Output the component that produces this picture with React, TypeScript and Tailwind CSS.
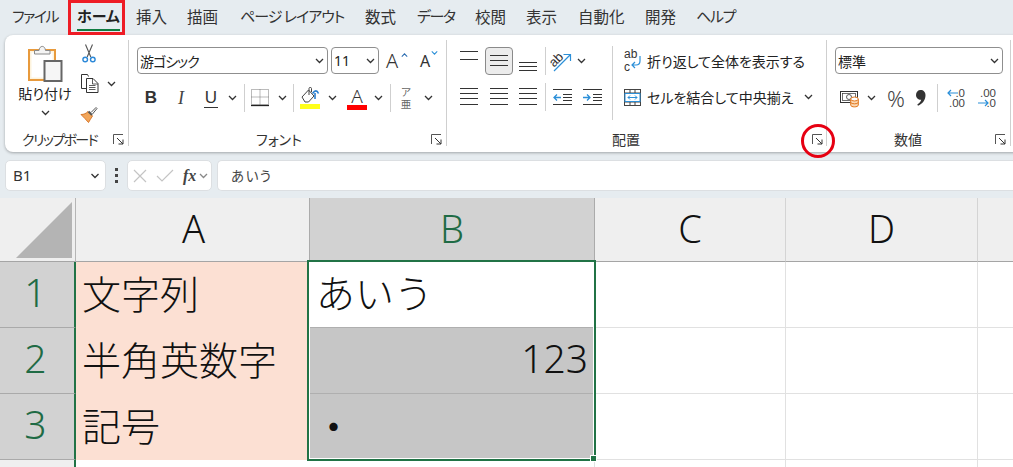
import React from "react";

const Chev = ({ w = 9, c = "#333" }: { w?: number; c?: string }) => (
  <svg width={w} height="6" viewBox="0 0 9 6" fill="none" className="block"><path d="M1 1l3.5 3.5L8 1" stroke={c} strokeWidth="1.3" /></svg>
);
const ChevBox = ({ cls = "w-[12px]" }: { cls?: string }) => (
  <div className={`${cls} h-[24px] flex items-center justify-center shrink-0`}><Chev /></div>
);
const Launcher = () => (
  <svg width="11" height="11" viewBox="0 0 11 11" fill="none" className="block"><path d="M.5 10V.5H10" stroke="#555" /><path d="M4 4l6 6M10 5.5V10H5.5" stroke="#333" /></svg>
);
const VSep = ({ h = "h-[28px]", ml = "ml-0" }: { h?: string; ml?: string }) => <div className={`w-px ${h} ${ml} bg-[#cfcfcf] shrink-0`} />;
const Btn = ({ w = "w-[30px]", children }: { w?: string; children?: React.ReactNode }) => (
  <div className={`${w} h-[24px] flex items-center justify-center shrink-0`}>{children}</div>
);
const Combo = ({ cls, text, tcls = "" }: { cls: string; text: string; tcls?: string }) => (
  <div className={`${cls} h-[27px] border border-[#8f8f8f] rounded-[4px] flex items-center justify-between pl-[2px] pr-[3px] bg-white shrink-0`}>
    <span className={`text-[14px] leading-none text-[#222] ${tcls}`}>{text}</span><Chev />
  </div>
);
const Lines = ({ ys }: { ys: number[] }) => (
  <svg width="18" height="18" viewBox="0 0 18 18" fill="none" className="block overflow-visible">
    {ys.map((y, i) => <path key={i} d={`M0 ${y + 0.5}H18`} stroke="#333" />)}
  </svg>
);
const GroupLabel = ({ text, pl, launcher, lpos, tcls = "" }: { text: string; pl: string; launcher?: boolean; lpos: string; tcls?: string }) => (
  <div className="mt-auto h-[18px] flex items-center relative">
    <span className={`text-[14px] leading-none text-[#333] whitespace-nowrap ${pl} ${tcls}`}>{text}</span>
    {launcher && <span className={`absolute top-[4px] ${lpos}`}><Launcher /></span>}
  </div>
);

const Paste = () => (
  <svg width="36" height="40" viewBox="0 0 36 40" fill="none" className="block">
    <rect x="2" y="7" width="26" height="30" fill="#fdf3dd" stroke="#e89a3c" strokeWidth="2" />
    <rect x="4.5" y="9.5" width="21" height="25" fill="#fff" />
    <path d="M7.5 11V7.5H12C12.5 2 18 2 18.5 7.5H23V11Z" fill="#f4f4f4" stroke="#8a8a8a" />
    <rect x="17.5" y="18" width="17" height="20" fill="#f6f6f6" stroke="#666" strokeWidth="2" />
  </svg>
);
const Scissors = () => (
  <svg width="14" height="19" viewBox="0 0 14 19" fill="none" className="block">
    <path d="M3.5 0.5L8.8 13M10.5 .5L5.2 13" stroke="#555" strokeWidth="1.1" />
    <circle cx="3.2" cy="15.5" r="2.3" stroke="#2b88d8" strokeWidth="1.4" /><circle cx="10.8" cy="15.5" r="2.3" stroke="#2b88d8" strokeWidth="1.4" />
  </svg>
);
const Copy = () => (
  <svg width="19" height="19" viewBox="0 0 19 19" fill="none" className="block">
    <path d="M6 14.5H1.5V.5H7.5L8.5 2.5" stroke="#333" />
    <path d="M6.5 4.5H13L18 9.5V18.5H6.5Z" fill="#fff" stroke="#333" /><path d="M12.5 4.5V10H18M9 11.5H15.5M9 13.5H15.5M9 15.5H15.5" stroke="#333" strokeWidth=".8" />
  </svg>
);
const Painter = () => (
  <svg width="18" height="17" viewBox="0 0 18 17" fill="none" className="block">
    <path d="M1 8.5C4 8.5 6 7.5 8 5.5L12.5 10C11 12.5 9.5 14.5 8.5 16.5C6 13.5 3.5 11 1 8.5Z" fill="#f2a65a" stroke="#d9782c" />
    <path d="M8.5 5.5L12 9" stroke="#555" strokeWidth="2" /><path d="M11 6.5L16 1.5L17 2.5L12.5 8" fill="#fff" stroke="#555" />
  </svg>
);
const Borders = () => (
  <svg width="18" height="18" viewBox="0 0 18 18" fill="none" className="block">
    <path d="M.5 .5H17.5V15.5H.5Z M.5 8H17.5M9 .5V15.5" stroke="#777" strokeDasharray="1 1" /><path d="M0 16.5H18" stroke="#222" strokeWidth="1.3" />
  </svg>
);
const Fill = () => (
  <div className="flex flex-col items-center">
    <svg width="20" height="17" viewBox="0 0 20 17" fill="none" className="block">
      <path d="M2 10L8.5 3L14 9L8.5 15H5Z" fill="#fff" stroke="#444" /><path d="M9 8V1.5C9 0 11.5 0 11.5 1.5V5" stroke="#444" />
      <path d="M15 12V6M12.5 6.5C15 3 17 3 18.5 6.5" stroke="#2b7fd0" strokeWidth="1.6" />
    </svg>
    <div className="w-[20px] h-[5px] bg-[#ffff1a]" />
  </div>
);
const Orient = () => (
  <svg width="24" height="24" viewBox="0 0 24 24" fill="none" className="block overflow-visible">
    <text x="0" y="15" fontSize="13" fill="#333" transform="rotate(-45 7 11)" fontFamily="'Liberation Sans',sans-serif">ab</text>
    <path d="M5 22L21 6M14.5 5.5H21.5V12" stroke="#2b8fd8" strokeWidth="1.2" />
  </svg>
);
const IndentL = () => (
  <svg width="19" height="16" viewBox="0 0 19 16" fill="none" className="block">
    <path d="M0 .5H19M10 5.5H19M10 8.5H19M10 11.5H19M0 15.5H19" stroke="#333" /><path d="M8 8.5H1M4 5.5L1 8.5L4 11.5" stroke="#2b8fd8" strokeWidth="1.3" />
  </svg>
);
const IndentR = () => (
  <svg width="19" height="16" viewBox="0 0 19 16" fill="none" className="block">
    <path d="M0 .5H19M10 5.5H19M10 8.5H19M10 11.5H19M0 15.5H19" stroke="#333" /><path d="M0 8.5H7M4 5.5L7 8.5L4 11.5" stroke="#2b8fd8" strokeWidth="1.3" />
  </svg>
);
const Wrap = () => (
  <div className="relative w-[18px] h-[20px] shrink-0">
    <span className="absolute left-0 top-[-3px] text-[12px] leading-[12px] text-[#333] font-['Liberation_Sans']">ab</span>
    <span className="absolute left-0 top-[10px] text-[12px] leading-[12px] text-[#333] font-['Liberation_Sans']">c</span>
    <svg width="18" height="20" viewBox="0 0 18 20" fill="none" className="absolute left-0 top-0"><path d="M16 5V10C16 13 14 14 12 14H8M11 11L8 14L11 17" stroke="#2b8fd8" strokeWidth="1.2" /></svg>
  </div>
);
const Merge = () => (
  <svg width="17" height="17" viewBox="0 0 17 17" fill="none" className="block shrink-0">
    <rect x=".5" y=".5" width="16" height="16" stroke="#444" /><path d="M.5 4H16.5M.5 13H16.5M6 .5V4M11 .5V4M6 13V16.5M11 13V16.5" stroke="#444" /><rect x="1" y="4.5" width="15" height="8" stroke="#2b8fd8" /><path d="M4 8.5H13M6 6.5L4 8.5L6 10.5M11 6.5L13 8.5L11 10.5" stroke="#2b8fd8" />
  </svg>
);
const Currency = () => (
  <svg width="20" height="20" viewBox="0 0 20 20" fill="none" className="block">
    <rect x=".5" y="3.5" width="17" height="11" fill="#fff" stroke="#333" /><rect x="2.5" y="5.5" width="13" height="7" stroke="#333" strokeWidth=".7" /><circle cx="9" cy="9" r="2.5" stroke="#333" strokeWidth=".8" />
    <path d="M10.7 11V17C10.7 19.5 18.3 19.5 18.3 17V11" fill="#fbd9b5" stroke="#e2761b" /><ellipse cx="14.5" cy="11" rx="3.8" ry="2" fill="#fff" stroke="#e2761b" /><path d="M10.7 14.5C11.5 16.3 17.5 16.3 18.3 14.5" stroke="#e2761b" />
  </svg>
);
const CommaIcon = () => (
  <svg width="10" height="16" viewBox="0 0 10 16" className="block"><path fill="#333" d="M4.5 0C7.5 0 9.5 2 9.5 5.2C9.5 10 6.3 14 2 15.8L1.3 14.6C3.8 13 5 11.2 5.2 9.8C2.5 10 0 8 0 5C0 2 2 0 4.5 0Z" /></svg>
);
const Dec = ({ dir }: { dir: "l" | "r" }) => (
  <div className="w-[18px] h-[20px] relative font-['Liberation_Sans'] text-[11.5px] leading-[10px] text-[#444]">
    <span className="absolute right-0 top-0">{dir === "l" ? ".0" : ".00"}</span>
    <span className="absolute right-0 top-[10px]">{dir === "l" ? ".00" : ".0"}</span>
    <svg width="11" height="8" viewBox="0 0 11 8" fill="none" className={`absolute ${dir === "l" ? "left-0 top-[1px]" : "left-0 top-[11px]"}`}>
      {dir === "l" ? <path d="M11 4H1M4 1L1 4L4 7" stroke="#2b8fd8" strokeWidth="1.2" /> : <path d="M0 4H10M7 1L10 4L7 7" stroke="#2b8fd8" strokeWidth="1.2" />}
    </svg>
  </div>
);

const tabs: { t: string; w: string; c: string }[] = [
  { t: "ファイル", w: "w-[65px]", c: "tracking-[-1.5px]" },
  { t: "ホーム", w: "w-[59px]", c: "font-bold text-[#222]" },
  { t: "挿入", w: "w-[51px]", c: "text-[15.5px]" },
  { t: "描画", w: "w-[53px]", c: "text-[15.5px]" },
  { t: "ページ レイアウト", w: "w-[125px]", c: "tracking-[-1px]" },
  { t: "数式", w: "w-[52px]", c: "text-[15.5px]" },
  { t: "データ", w: "w-[58px]", c: "tracking-[-1.5px]" },
  { t: "校閲", w: "w-[51px]", c: "text-[15.5px]" },
  { t: "表示", w: "w-[52px]", c: "text-[15.5px]" },
  { t: "自動化", w: "w-[67px]", c: "text-[15.5px]" },
  { t: "開発", w: "w-[51px]", c: "text-[15.5px]" },
  { t: "ヘルプ", w: "w-[50px]", c: "tracking-[-1.3px]" },
];

const latin = "font-['Noto_Sans'] font-light";
const hCell = `flex items-center justify-center text-[38px] leading-none pb-[4px] ${latin}`;
const rowHead = `bg-[#d2d2d2] border-b border-[#aaaaaa] flex items-center justify-center text-[39px] leading-none text-[#1f6b45] pr-[3px] pb-[6px] ${latin}`;
const pink = "bg-[#fce0d3] flex items-center pl-[6px] pb-[6px] text-[39px] leading-none text-[#111] whitespace-nowrap font-light";
const blank = "border-r border-b border-[#e1e1e1] bg-white";

export default function App() {
  return (
    <div className="relative w-[1013px] h-[467px] overflow-hidden bg-[#e6ecf0] font-['Noto_Sans_CJK_JP','Noto_Sans',sans-serif] [font-feature-settings:'palt']">
      {/* tab strip */}
      <div className="h-[35px] flex items-center pl-[12px] pb-[3px] text-[15px] text-[#333]">
        {tabs.map(({ t, w, c }) => (
          <div key={t} className={`${w} shrink-0 whitespace-nowrap leading-[20px]`}>
            <span className={`relative inline-block ${c}`}>
              {t}
              {t === "ホーム" && <span className="absolute left-0 right-0 top-[23px] h-[2px] bg-[#107c41]" />}
            </span>
          </div>
        ))}
      </div>

      {/* ribbon */}
      <div className="ml-[5px] w-[1030px] h-[117px] bg-white rounded-l-[8px] shadow-[0_1px_3px_rgba(0,0,0,0.3)] flex pt-[5px] pb-[4px]">
        {/* clipboard */}
        <div className="w-[123px] flex flex-col shrink-0">
          <div className="flex">
            <div className="ml-[12px] w-[56px] flex flex-col items-center pt-[3px]">
              <Paste />
              <span className="text-[14px] leading-[20px] whitespace-nowrap text-[#222]">貼り付け</span>
              <div className="mt-[7px]"><Chev /></div>
            </div>
            <div className="ml-[7px] pt-[4px] flex flex-col items-start">
              <div className="ml-[2px]"><Scissors /></div>
              <div className="mt-[11px] flex items-center"><Copy /><div className="ml-[8px]"><Chev /></div></div>
              <div className="mt-[13px]"><Painter /></div>
            </div>
          </div>
          <GroupLabel text="クリップボード" pl="pl-[17px]" tcls="tracking-[-1.6px]" launcher lpos="left-[108px]" />
        </div>
        <VSep h="h-[106px]" />
        {/* font */}
        <div className="w-[317px] flex flex-col shrink-0">
          <div className="flex items-center pt-[7px] pl-[8px]">
            <Combo cls="w-[191px]" text="游ゴシック" tcls="tracking-[-1px]" />
            <Combo cls="w-[48px] ml-[3px]" text="11" tcls="font-['Noto_Sans']" />
            <div className="ml-[6px] w-[30px] text-[20px] leading-none text-[#333] relative font-['Noto_Sans'] font-light pl-[1px]">A<span className="absolute left-[16px] top-[1px] rotate-180"><Chev w={7} c="#2b6cb0" /></span></div>
            <div className="w-[30px] text-[16px] leading-none text-[#333] relative font-['Noto_Sans'] pl-[5px]">A<span className="absolute left-[16px] top-[-3px]"><Chev w={7} c="#2b8fd8" /></span></div>
          </div>
          <div className="flex items-center mt-[10px] pl-[7px]">
            <Btn><span className="font-['Liberation_Sans'] font-bold text-[17px] text-[#333]">B</span></Btn>
            <Btn><span className="font-['Liberation_Serif'] italic text-[18px] text-[#444]">I</span></Btn>
            <Btn><span className="font-['Liberation_Sans'] text-[17px] text-[#333] border-b border-[#333] leading-[18px] px-[1px]">U</span></Btn>
            <ChevBox />
            <VSep ml="ml-[6px]" />
            <Btn w="w-[30px]"><Borders /></Btn>
            <div className="ml-[1px]"><ChevBox /></div>
            <VSep ml="ml-[5px]" />
            <Btn w="w-[32px]"><Fill /></Btn>
            <ChevBox />
            <div className="ml-[4px] w-[30px] h-[24px] flex flex-col items-center justify-end">
              <span className="font-['Noto_Sans'] font-light text-[19px] leading-[18px] text-[#333]">A</span>
              <div className="w-[20px] h-[5px] bg-[#ff0000]" />
            </div>
            <ChevBox />
            <VSep ml="ml-[6px]" />
            <div className="w-[30px] flex flex-col items-center text-[10.5px] leading-[12px] text-[#666]"><span>ア</span><span>亜</span></div>
            <div className="ml-[1px]"><ChevBox /></div>
          </div>
          <GroupLabel text="フォント" pl="pl-[127px]" launcher lpos="left-[302px]" />
        </div>
        <VSep h="h-[106px]" />
        {/* alignment */}
        <div className="w-[379px] flex flex-col shrink-0">
          <div className="flex">
            <div className="w-[165px] pt-[7px] pl-[8px] flex flex-col shrink-0">
              <div className="flex items-center h-[28px]">
                <div className="w-[28px] h-[28px] flex items-center justify-center"><Lines ys={[-1, 7]} /></div>
                <div className="ml-[2px] w-[28px] h-[28px] flex items-center justify-center bg-[#ececec] border border-[#8a8a8a] rounded-[4px]"><Lines ys={[3, 8, 13]} /></div>
                <div className="ml-[1px] w-[28px] h-[28px] flex items-center justify-center"><Lines ys={[10, 14, 18]} /></div>
                <VSep ml="ml-[3px]" />
                <div className="w-[28px] h-[28px] ml-[1px] flex items-center justify-center"><Orient /></div>
                <div className="ml-[2px]"><Chev /></div>
              </div>
              <div className="flex items-center h-[28px] mt-[8px]">
                <div className="w-[28px] h-[28px] flex items-center justify-center"><Lines ys={[0, 5, 10, 16]} /></div>
                <div className="ml-[2px] w-[28px] h-[28px] flex items-center justify-center"><Lines ys={[0, 5, 10, 16]} /></div>
                <div className="ml-[1px] w-[28px] h-[28px] flex items-center justify-center"><Lines ys={[0, 5, 10, 16]} /></div>
                <VSep ml="ml-[3px]" />
                <div className="ml-[7px]"><IndentL /></div>
                <div className="ml-[11px]"><IndentR /></div>
              </div>
            </div>
            <VSep h="h-[74px] mt-[6px]" />
            <div className="pl-[11px] pt-[11px] flex flex-col">
              <div className="flex items-center h-[20px] gap-[5px]"><Wrap /><span className="text-[14px] leading-[20px] whitespace-nowrap text-[#222]">折り返して全体を表示する</span></div>
              <div className="flex items-center h-[20px] mt-[16px] gap-[6px]"><Merge /><span className="text-[14px] leading-[20px] whitespace-nowrap text-[#222]">セルを結合して中央揃え</span><div className="ml-[5px]"><Chev /></div></div>
            </div>
          </div>
          <GroupLabel text="配置" pl="pl-[165px]" launcher lpos="left-[365px]" />
        </div>
        <VSep h="h-[106px]" />
        {/* number */}
        <div className="w-[183px] flex flex-col shrink-0">
          <div className="pt-[7px] pl-[8px]"><Combo cls="w-[168px]" text="標準" /></div>
          <div className="flex items-center mt-[10px] pl-[13px]">
            <Currency />
            <div className="ml-[7px]"><Chev /></div>
            <span className="ml-[11px] w-[22px] font-['Noto_Sans'] font-light text-[22px] leading-[24px] text-[#444]">%</span>
            <div className="ml-[7px]"><CommaIcon /></div>
            <VSep ml="ml-[11px]" />
            <div className="ml-[9px]"><Dec dir="l" /></div>
            <div className="ml-[13px]"><Dec dir="r" /></div>
          </div>
          <GroupLabel text="数値" pl="pl-[67px]" launcher lpos="left-[168px]" />
        </div>
        <VSep h="h-[106px]" />
      </div>

      {/* formula bar */}
      <div className="mt-[8px] h-[31px] flex items-stretch">
        <div className="ml-[5px] w-[101px] bg-white rounded-[5px] border border-[#dcdfe2] flex items-center justify-between pl-[7px] pr-[5px] shrink-0">
          <span className="font-['Noto_Sans'] text-[15px] text-[#333]">B1</span><Chev w={10} />
        </div>
        <div className="w-[21px] flex flex-col items-center justify-center gap-[3px] shrink-0">
          <span className="w-[3px] h-[3px] bg-[#444]" /><span className="w-[3px] h-[3px] bg-[#444]" /><span className="w-[3px] h-[3px] bg-[#444]" />
        </div>
        <div className="w-[85px] bg-white rounded-[5px] border border-[#dcdfe2] flex items-center pl-[5px] shrink-0">
          <svg width="14" height="14" viewBox="0 0 14 14" fill="none"><path d="M1 1L13 13M13 1L1 13" stroke="#c4c4c4" strokeWidth="1.2" /></svg>
          <svg width="18" height="14" viewBox="0 0 18 14" fill="none" className="ml-[9px]"><path d="M1 7L6 12L17 1" stroke="#c4c4c4" strokeWidth="1.2" /></svg>
          <span className="ml-[9px] font-['Liberation_Serif'] italic font-bold text-[16px] leading-none text-[#444]">fx</span>
          <div className="ml-[3px]"><Chev c="#888" /></div>
        </div>
        <div className="ml-[5px] flex-1 bg-white rounded-l-[5px] border border-r-0 border-[#dcdfe2] flex items-center pl-[13px]">
          <span className="text-[13.5px] text-[#444] tracking-[1.5px]">あいう</span>
        </div>
      </div>

      {/* sheet */}
      <div className="relative mt-[7px] grid grid-cols-[76px_233px_286px_191px_192px_1fr] grid-rows-[64px_66px_66px_66px_1fr] h-[269px] bg-white font-['Noto_Sans_CJK_JP','Noto_Sans',sans-serif] [font-feature-settings:normal]">
        <div className="bg-[#efefef] border-b border-[#a5a5a5] border-r border-r-[#b5b5b5] flex items-end justify-end pr-[3px] pb-[3px]">
          <svg width="56" height="56" viewBox="0 0 56 56" className="block"><path d="M56 0V56H0Z" fill="#b4b4b4" /></svg>
        </div>
        <div className={`${hCell} bg-[#efefef] border-b border-[#a5a5a5] text-[#111] pl-[2px]`}>A</div>
        <div className={`${hCell} bg-[#d2d2d2] border-b border-[#a5a5a5] border-x border-x-[#ababab] text-[#1f6b45]`}>B</div>
        <div className={`${hCell} bg-[#efefef] border-b border-[#a5a5a5] border-r border-r-[#d4d4d4] text-[#111]`}>C</div>
        <div className={`${hCell} bg-[#efefef] border-b border-[#a5a5a5] border-r border-r-[#d4d4d4] text-[#111]`}>D</div>
        <div className="bg-[#efefef] border-b border-[#a5a5a5]" />

        <div className={`${rowHead} border-r-[2px] border-r-[#217346]`}>1</div>
        <div className={pink}>文字列</div>
        <div className="bg-white border-b border-[#afafaf] flex items-center pl-[7px] pb-[6px] text-[39px] leading-none text-[#111] font-light">あいう</div>
        <div className={blank} /><div className={blank} /><div className="border-b border-[#e1e1e1]" />

        <div className={`${rowHead} border-r-[2px] border-r-[#217346]`}>2</div>
        <div className={pink}>半角英数字</div>
        <div className={`bg-[#c6c6c6] border-b border-b-[#afafaf] flex items-center justify-end pr-[7px] pb-[6px] text-[39px] leading-none text-[#111] ${latin}`}>123</div>
        <div className={blank} /><div className={blank} /><div className="border-b border-[#e1e1e1]" />

        <div className={`${rowHead} border-r-[2px] border-r-[#217346]`}>3</div>
        <div className={pink}>記号</div>
        <div className="bg-[#c6c6c6] flex items-center pl-[5px] pb-[6px] text-[39px] leading-none text-[#111]">・</div>
        <div className={blank} /><div className={blank} /><div className="border-b border-[#e1e1e1]" />

        <div className="bg-[#efefef] border-r-[2px] border-r-[#217346]" />
        <div className="bg-white" /><div className="bg-white border-r border-[#e1e1e1]" /><div className="bg-white border-r border-[#e1e1e1]" /><div className="bg-white border-r border-[#e1e1e1]" /><div className="bg-white" />

        {/* selection */}
        <div className="absolute left-[307px] top-[62px] w-[289px] h-[201px] border-[2px] border-[#217346] pointer-events-none">
          <div className="w-full h-full border border-white border-t-0" />
          <div className="absolute right-[-3px] bottom-[-3px] w-[7px] h-[7px] bg-[#217346] border border-white" />
        </div>
      </div>

      {/* annotations */}
      <div className="absolute left-[68px] top-0 w-[57px] h-[35px] border-[3px] border-[#ee1c25] pointer-events-none" />
      <div className="absolute left-[801px] top-[124px] w-[34px] h-[34px] rounded-full border-[3px] border-[#e60012] pointer-events-none" />
    </div>
  );
}
